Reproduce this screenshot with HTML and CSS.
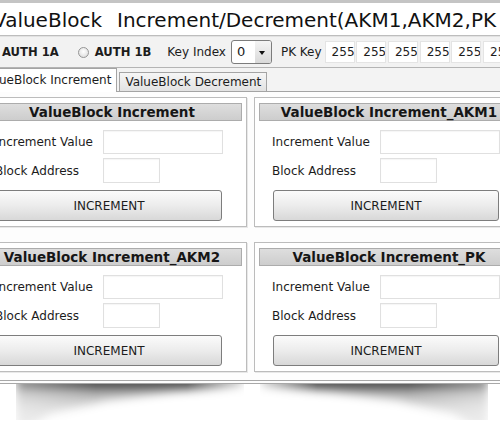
FILE: index.html
```
<!DOCTYPE html>
<html>
<head>
    <meta charset="utf-8" />
    <title>ValueBlock Increment/Decrement</title>
    <link rel="stylesheet" href="styles.css">
</head>
<body>
    <div id="app-window">
        <div class="title-bar">
            <span class="title-name">ValueBlock</span>Increment/Decrement(AKM1,AKM2,PK
        </div>
        <div class="toolbar">
            <label class="auth"><span class="radio"></span>AUTH 1A</label>
            <label class="auth auth-b"><span class="radio"></span>AUTH 1B</label>
            <span class="key-label">Key Index</span>
            <div class="select-box">
                <span class="select-value">0</span>
                <span class="select-arrow"></span>
            </div>
            <span class="pk-label">PK Key</span>
            <div class="pk-keys">
                <input type="text" value="255" />
                <input type="text" value="255" />
                <input type="text" value="255" />
                <input type="text" value="255" />
                <input type="text" value="255" />
                <input type="text" value="255" />
            </div>
        </div>
        <div class="tabs">
            <div class="tab active">ValueBlock Increment</div>
            <div class="tab">ValueBlock Decrement</div>
        </div>
        <div class="tab-panel">
            <div class="groups">
                <div class="group">
                    <div class="group-head">ValueBlock Increment</div>
                    <div class="fields">
                        <label>Increment Value</label>
                        <input type="text" class="value-input" />
                        <label>Block Address</label>
                        <input type="text" class="address-input" />
                    </div>
                    <button type="button">INCREMENT</button>
                </div>
                <div class="group">
                    <div class="group-head">ValueBlock Increment_AKM1</div>
                    <div class="fields">
                        <label>Increment Value</label>
                        <input type="text" class="value-input" />
                        <label>Block Address</label>
                        <input type="text" class="address-input" />
                    </div>
                    <button type="button">INCREMENT</button>
                </div>
                <div class="group">
                    <div class="group-head">ValueBlock Increment_AKM2</div>
                    <div class="fields">
                        <label>Increment Value</label>
                        <input type="text" class="value-input" />
                        <label>Block Address</label>
                        <input type="text" class="address-input" />
                    </div>
                    <button type="button">INCREMENT</button>
                </div>
                <div class="group">
                    <div class="group-head">ValueBlock Increment_PK</div>
                    <div class="fields">
                        <label>Increment Value</label>
                        <input type="text" class="value-input" />
                        <label>Block Address</label>
                        <input type="text" class="address-input" />
                    </div>
                    <button type="button">INCREMENT</button>
                </div>
            </div>
        </div>
        <div class="curl-shadow">
            <div class="curl"><div class="curl-shape"></div></div>
            <div class="curl curl-right"><div class="curl-shape"></div></div>
        </div>
    </div>
</body>
</html>
```

FILE: styles.css
```
*, *:before, *:after{
    box-sizing:border-box;
}
html, body{
    margin:0;
    overflow:hidden;
    background:#fff;
}
body{
    width:500px;
    height:421px;
    font-family:"DejaVu Sans", Verdana, sans-serif;
    font-size:12px;
    color:#1c1c1c;
}
#app-window{
    width:500px;
    border-top:3px solid #c4c4c4;
}
.title-bar{
    height:33px;
    padding-top:5px;
    margin-left:-7px;
    font-size:20px;
    line-height:24px;
    color:#111;
    white-space:nowrap;
    background:#fff;
    border-bottom:1px solid #bdbdbd;
}
    .title-name{
        margin-right:15px;
    }
.toolbar{
    display:flex;
    align-items:center;
    height:32px;
    white-space:nowrap;
    background:#f2f2f2;
    border-top:1px solid #e2e2e2;
    border-bottom:1px solid #b4b4b4;
}
    .toolbar > *{
        flex-shrink:0;
    }
.auth{
    display:flex;
    align-items:center;
    margin-left:-15px;
    font-size:11.6px;
    font-weight:bold;
}
    .auth-b{
        margin-left:19px;
    }
.radio{
    display:inline-block;
    width:11px;
    height:11px;
    margin-right:6px;
    border:1px solid #959595;
    border-radius:50%;
    background:radial-gradient(circle at 50% 40%, #fff, #d6d6d6);
}
.key-label{
    margin-left:16px;
}
.select-box{
    display:flex;
    width:41px;
    height:24px;
    margin-left:5px;
    border:1px solid #7c7c7c;
    border-radius:3px;
    background:#fff;
    overflow:hidden;
}
    .select-value{
        flex:1;
        padding-left:5px;
        font-size:13px;
        line-height:22px;
    }
    .select-arrow{
        position:relative;
        width:16px;
        background:linear-gradient(#f4f4f4, #d9d9d9);
    }
        .select-arrow:after{
            content:"";
            position:absolute;
            left:4px;
            top:10px;
            border-left:3.5px solid transparent;
            border-right:3.5px solid transparent;
            border-top:4px solid #111;
        }
.pk-label{
    margin-left:9px;
}
.pk-keys{
    display:flex;
    gap:1.7px;
    margin-left:3px;
}
    .pk-keys input{
        flex-shrink:0;
        width:30px;
        height:22px;
        padding:0 0 0 6px;
        border:1px solid #e4e4e4;
        background:#fff;
        font-family:"DejaVu Sans", Verdana, sans-serif;
        font-size:12px;
        color:#1c1c1c;
    }
.tabs{
    display:flex;
    align-items:flex-end;
    gap:2px;
    height:24px;
    margin-left:-25px;
    background:#f3f3f3;
    border-bottom:1px solid #a4a4a4;
}
.tab{
    height:19px;
    padding:0 5px;
    line-height:18px;
    white-space:nowrap;
    border:1px solid #a4a4a4;
    border-bottom:none;
    background:linear-gradient(#f6f6f6, #e2e2e2);
}
    .tab.active{
        height:24px;
        margin-bottom:-1px;
        line-height:22px;
        background:#fff;
    }
.tab-panel{
    padding:5px 0 8px;
    background:#fdfdfd;
    border-bottom:4px double #a8a8a8;
}
.groups{
    display:grid;
    grid-template-columns:270px 270px;
    column-gap:7px;
    row-gap:15px;
    margin-left:-23px;
}
.group{
    height:130px;
    padding:5px 4px 5px;
    background:#fff;
    border:1px solid #bcbcbc;
    box-shadow:inset 1px 1px 0 #fff, 1px 1px 0 #e8e8e8;
}
.group-head{
    height:18px;
    line-height:16px;
    text-align:center;
    font-size:13.5px;
    font-weight:bold;
    white-space:nowrap;
    color:#161616;
    border:1px solid #acacac;
    background:linear-gradient(#dedede, #cdcdcd);
}
.fields{
    display:grid;
    grid-template-columns:108px auto;
    row-gap:4px;
    align-items:center;
    margin-top:9px;
    padding-left:13px;
}
    .fields input{
        border:1px solid #e0e0e0;
        background:#fff;
        box-shadow:inset 0 1px 1px rgba(0,0,0,0.04);
    }
    .value-input{
        width:120px;
        height:24px;
    }
    .address-input{
        width:57px;
        height:25px;
    }
button{
    display:block;
    width:226px;
    height:31px;
    margin:7px 0 0 14px;
    font-family:"DejaVu Sans", Verdana, sans-serif;
    font-size:12px;
    color:#1c1c1c;
    border:1px solid #7d7d7d;
    border-radius:3px;
    background:linear-gradient(#fbfbfb, #ececec 50%, #d8d8d8);
}
.curl-shadow{
    display:flex;
    justify-content:space-between;
    height:36px;
    padding:0 12px 0 16px;
    overflow:hidden;
}
.curl{
    width:228px;
    margin-top:-8px;
    filter:blur(5px);
    -webkit-mask-image:linear-gradient(to right, rgba(0,0,0,0.6), #000 35%, #000 75%, rgba(0,0,0,0.2));
    mask-image:linear-gradient(to right, rgba(0,0,0,0.6), #000 35%, #000 75%, rgba(0,0,0,0.2));
}
    .curl-right{
        transform:scaleX(-1);
    }
.curl-shape{
    height:52px;
    clip-path:polygon(0% 0%, 100% 0%, 100% 20%, 70% 30%, 40% 46%, 15% 72%, 5% 100%, 0% 95%);
    background:linear-gradient(rgba(0,0,0,0.75) 14%, rgba(0,0,0,0.3) 32%, rgba(0,0,0,0.15) 62%, rgba(0,0,0,0.1));
}
```
